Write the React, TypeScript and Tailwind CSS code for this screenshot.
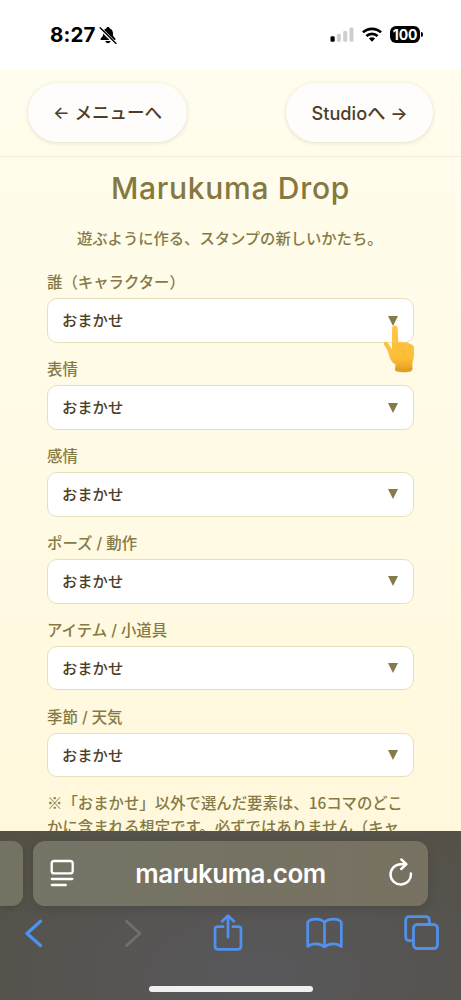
import { Fragment } from "react";

const fields = ["誰（キャラクター）", "表情", "感情", "ポーズ / 動作", "アイテム / 小道具", "季節 / 天気"];
const noteLines = ["※「おまかせ」以外で選んだ要素は、16コマのどこ", "かに含まれる想定です。必ずではありません（キャ"];

function StatusBar() {
  return (
    <header className="flex h-[70px] shrink-0 items-start justify-between bg-white pl-[50px] pr-[38px] pt-[25px] text-black">
      <div className="flex items-center">
        <span className="w-[49px] whitespace-nowrap text-[20.5px] font-bold leading-5 tracking-[0.1px]">8:27</span>
        <svg aria-label="消音" className="h-[18px] w-[18px]" viewBox="0 0 18 18">
          <path d="M9 1C7.9 1 7.4 1.7 7.2 2.4C4.9 3.2 4 5.1 4 7.5V9.2C4 10.6 1.5 11.8 1.5 13.2C1.5 13.8 1.9 14.1 2.6 14.1H15.4C16.1 14.1 16.5 13.8 16.5 13.2C16.5 11.8 14 10.6 14 9.2V7.5C14 5.1 13.1 3.2 10.8 2.4C10.6 1.7 10.1 1 9 1ZM6.3 15.1C6.7 16.4 7.6 17.2 9 17.2S11.3 16.4 11.7 15.1Z" />
          <path d="M1 2.2L16.5 17.6" stroke="white" strokeWidth="3.4" />
          <path d="M1.2 1.8L17 17.4" stroke="black" strokeWidth="1.4" strokeLinecap="round" />
        </svg>
      </div>
      <div className="flex items-center pt-px">
        <svg className="h-[15px] w-[24px]" viewBox="0 0 24 15">
          <rect x="0.5" y="9.3" width="4.2" height="5.5" rx="1.3" />
          <g fill="#cecece">
            <rect x="6.9" y="7" width="4" height="7.8" rx="1.2" />
            <rect x="13.2" y="4" width="4" height="10.8" rx="1.2" />
            <rect x="19.5" y="0.5" width="4" height="14.3" rx="1.2" />
          </g>
        </svg>
        <svg className="ml-[8px] h-[15px] w-5" viewBox="0 0 20 15" fill="none" stroke="black" strokeWidth="2.7">
          <path d="M1 5.4C6 0.6 14 0.6 19 5.4" />
          <path d="M4.4 9C7.5 6.1 12.5 6.1 15.6 9" />
          <path d="M6.9 11.5C8.6 9.9 11.4 9.9 13.1 11.5L10 14.7Z" fill="black" stroke="none" />
        </svg>
        <div className="ml-[8px] flex h-[17px] w-[30px] items-center justify-center rounded-[6px] bg-black text-[14px] font-bold leading-none tracking-[-0.2px] text-white">
          100
        </div>
        <div className="ml-px h-[5px] w-[2px] rounded-r bg-black" />
      </div>
    </header>
  );
}

function SelectField({ label }: { label: string }) {
  return (
    <div className="h-[86.9px]">
      <div className="h-[29px] whitespace-pre text-[15.4px] font-medium leading-[27px] text-[#857a45]">{label}</div>
      <button className="flex h-[44.5px] w-[367px] items-center justify-between rounded-[10px] border border-[#e6e0bd] bg-white pl-3.5 pr-[15px] text-[15.3px] font-medium text-[#4d3d26]">
        <span className="pt-0.5">おまかせ</span>
        <svg className="h-2.5 w-2.5" viewBox="0 0 10 10" fill="#857b4a">
          <path d="M0 0H10L5 10Z" />
        </svg>
      </button>
    </div>
  );
}

function PointingHand() {
  return (
    <svg className="absolute left-[383px] top-[324px] h-[49px] w-[32px]" viewBox="0 0 32 49">
      <defs>
        <linearGradient id="skin" x1="0" y1="0" x2="0" y2="1">
          <stop offset="0" stopColor="#ffc849" />
          <stop offset="0.7" stopColor="#fdbd36" />
          <stop offset="1" stopColor="#e39a20" />
        </linearGradient>
      </defs>
      <path
        d="M9 4.2C9 .6 14.6 .6 14.7 4.2L15.3 18.5C17.5 17.3 19.5 17.5 21 18.8C23.3 17.8 25.5 18.4 26.8 20.2C29.5 19.8 31 21.6 31 24.5V30C31 35 29.7 37 29.3 40L29.5 45C29.4 47.4 27 48.2 21 48.2C14.500 48.2 12 47.5 11.9 45.2L12.6 40.5C8.3 38 6.8 34.5 5.6 29.5C4.6 24.8 .9 21.8 .7 19.3C.7 17.2 3.6 17.2 5 19C6.6 21 7.5 23.7 9 25.2Z"
        fill="url(#skin)"
      />
      <path d="M15.2 18.8C14.6 21.5 14.7 24 15.6 25.4M21 19.2C20.3 20.3 20.3 22 20.5 23M26.7 20.5C26.1 21.6 26.1 23 26.2 24" fill="none" stroke="#f2b03a" strokeWidth="0.7" />
      <path d="M15.6 26C19 25.5 21.8 27 21.5 29.5C21.3 31.5 19.5 33 17.5 34" fill="none" stroke="#f2b03a" strokeWidth="0.8" />
      <path d="M12.6 44C17 46 24 46.3 29.2 44" fill="none" stroke="#dd9628" strokeWidth="0.7" />
    </svg>
  );
}

function BrowserBar() {
  return (
    <footer className="h-[169px] shrink-0 overflow-hidden bg-[radial-gradient(ellipse_at_55%_85%,#585759_10%,#565450_55%,#545044_100%)]">
      <div className="flex pt-[9.5px]">
        <div className="h-[65px] w-[23px] rounded-r-[11px] bg-[#737263] shadow-md" />
        <div className="ml-2.5 flex h-[65px] w-[395px] items-center rounded-[12px] bg-linear-to-r from-[#757466] to-[#777161] pl-[17px] pr-[15px] text-white shadow-[0_3px_12px_rgba(0,0,0,0.12)]">
          <svg className="h-[29px] w-6 shrink-0" viewBox="0 0 24 29" fill="none" stroke="currentColor" strokeWidth="2.3" strokeLinecap="round">
            <rect x="1.7" y="2" width="21" height="12.4" rx="2.5" />
            <path d="M1.8 20H22.3M1.8 26H15.8" />
          </svg>
          <span className="flex-1 pr-0.5 text-center text-[26px] font-semibold tracking-[-0.5px]">marukuma.com</span>
          <svg className="-mt-0.5 h-7 w-6 shrink-0" viewBox="0 0 24 28" fill="none" stroke="currentColor" strokeWidth="2.5" strokeLinecap="round" strokeLinejoin="round">
            <path d="M21.9 15.5A10.2 10.2 0 1 1 11.7 6.2H17" />
            <path d="M12.3 1.5L17.3 6.2L12.3 11" />
          </svg>
        </div>
      </div>
      <nav className="flex h-[56px] items-center pl-6 text-[#4f91ed]">
        <svg className="h-[29px] w-[19px]" viewBox="0 0 19 29" fill="none" stroke="currentColor" strokeWidth="3.2" strokeLinecap="round" strokeLinejoin="round">
          <path d="M16.5 2.2L3 14.5L16.5 26.5" />
        </svg>
        <svg className="ml-[81px] h-[29px] w-[19px] text-[#706f6d]" viewBox="0 0 19 29" fill="none" stroke="currentColor" strokeWidth="2.8" strokeLinecap="round" strokeLinejoin="round">
          <path d="M2.5 2.2L16 14.5L2.5 26.5" />
        </svg>
        <svg className="-mt-0.5 ml-[70px] h-[37px] w-[30px]" viewBox="0 0 30 38" fill="none" stroke="currentColor" strokeWidth="2.8" strokeLinecap="round" strokeLinejoin="round">
          <path d="M10 13H4.5Q1.7 13 1.7 15.8V33.5Q1.7 36.3 4.5 36.3H25.5Q28.3 36.3 28.3 33.5V15.8Q28.3 13 25.5 13H20" />
          <path d="M15 24V2M9 7.5L15 1.7L21 7.5" />
        </svg>
        <svg className="-mt-0.5 ml-[63px] h-[32px] w-[37px]" viewBox="0 0 37 32" fill="none" stroke="currentColor" strokeWidth="2.7" strokeLinejoin="round">
          <path d="M18.5 5.5C15 1 5 1 1.7 5V29.5C6 25.8 14 25.8 18.5 30C23 25.8 31 25.8 35.3 29.5V5C32 1 22 1 18.5 5.5V30" />
        </svg>
        <svg className="-mt-0.5 ml-[61px] h-[35px] w-[35px]" viewBox="0 0 35 35" fill="none" stroke="currentColor" strokeWidth="2.8" strokeLinejoin="round">
          <path d="M9 25.7H5.5Q1.7 25.7 1.7 22V5.5Q1.7 1.7 5.5 1.7H21.5Q25.3 1.7 25.3 5.5V9" />
          <rect x="9.5" y="9.5" width="24" height="24" rx="3.8" />
        </svg>
      </nav>
      <div className="mx-auto mt-[24px] h-1.5 w-[164px] rounded-full bg-[#f0f0ef]" />
    </footer>
  );
}

export default function App() {
  return (
    <div className="relative flex h-[1000px] w-[461px] flex-col overflow-hidden font-[Inter,'Noto_Sans_CJK_JP',sans-serif]">
      <StatusBar />
      <main className="h-[761px] overflow-hidden bg-linear-to-b from-[#fffdee] to-[#fff8dc]">
        <nav className="flex h-[87px] justify-between border-b border-[#f3efdf] px-[28px] pt-[13px] text-[17.5px] font-medium text-[#4d3d26]">
          <button className="flex h-[59px] w-[159px] items-center justify-center whitespace-pre rounded-full bg-[#fffdfb] pt-0.5 shadow-[0_1px_4px_rgba(80,60,20,0.16)]">
            ← メニューへ
          </button>
          <button className="flex h-[59px] w-[147px] items-center justify-center whitespace-pre rounded-full bg-[#fffdfb] pt-0.5 text-[18.2px] shadow-[0_1px_4px_rgba(80,60,20,0.16)]">
            Studioへ →
          </button>
        </nav>
        <h1 className="mt-[13px] text-center text-[30px] font-medium leading-9 tracking-[0.7px] text-[#857840]">Marukuma Drop</h1>
        <p className="mt-[21px] pl-[77px] text-[15.3px] font-medium leading-6 text-[#857a45]">遊ぶように作る、スタンプの新しいかたち。</p>
        <section className="ml-[47px] mt-[18.4px]">
          {fields.map((label) => (
            <SelectField key={label} label={label} />
          ))}
          <p className="-mt-px whitespace-nowrap font-['Noto_Sans_CJK_JP',sans-serif] text-[15.4px] font-medium leading-6 text-[#857a45]">
            {noteLines.map((line) => (
              <Fragment key={line}>
                {line}
                <br />
              </Fragment>
            ))}
          </p>
        </section>
      </main>
      <BrowserBar />
      <PointingHand />
    </div>
  );
}
